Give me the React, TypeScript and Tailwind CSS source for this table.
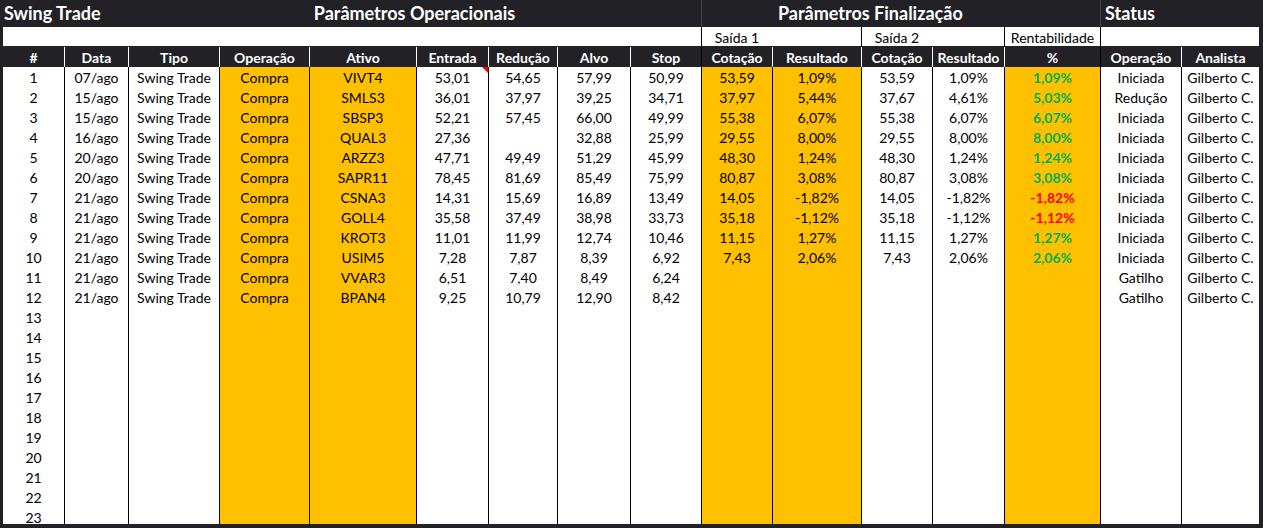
const grid =
  "grid grid-cols-[61px_64px_91px_90px_107px_72px_69px_73px_71px_71px_89px_71px_72px_96px_81px_78px]";

const orange = [3, 4, 9, 10, 13];

const headers = [
  "#",
  "Data",
  "Tipo",
  "Operação",
  "Ativo",
  "Entrada",
  "Redução",
  "Alvo",
  "Stop",
  "Cotação",
  "Resultado",
  "Cotação",
  "Resultado",
  "%",
  "Operação",
  "Analista",
];

// data, ativo, entrada, redução, alvo, stop, cot1, res1, cot2, res2, rent, status
const trades: string[][] = [
  ["07/ago", "VIVT4", "53,01", "54,65", "57,99", "50,99", "53,59", "1,09%", "53,59", "1,09%", "1,09%", "Iniciada"],
  ["15/ago", "SMLS3", "36,01", "37,97", "39,25", "34,71", "37,97", "5,44%", "37,67", "4,61%", "5,03%", "Redução"],
  ["15/ago", "SBSP3", "52,21", "57,45", "66,00", "49,99", "55,38", "6,07%", "55,38", "6,07%", "6,07%", "Iniciada"],
  ["16/ago", "QUAL3", "27,36", "", "32,88", "25,99", "29,55", "8,00%", "29,55", "8,00%", "8,00%", "Iniciada"],
  ["20/ago", "ARZZ3", "47,71", "49,49", "51,29", "45,99", "48,30", "1,24%", "48,30", "1,24%", "1,24%", "Iniciada"],
  ["20/ago", "SAPR11", "78,45", "81,69", "85,49", "75,99", "80,87", "3,08%", "80,87", "3,08%", "3,08%", "Iniciada"],
  ["21/ago", "CSNA3", "14,31", "15,69", "16,89", "13,49", "14,05", "-1,82%", "14,05", "-1,82%", "-1,82%", "Iniciada"],
  ["21/ago", "GOLL4", "35,58", "37,49", "38,98", "33,73", "35,18", "-1,12%", "35,18", "-1,12%", "-1,12%", "Iniciada"],
  ["21/ago", "KROT3", "11,01", "11,99", "12,74", "10,46", "11,15", "1,27%", "11,15", "1,27%", "1,27%", "Iniciada"],
  ["21/ago", "USIM5", "7,28", "7,87", "8,39", "6,92", "7,43", "2,06%", "7,43", "2,06%", "2,06%", "Iniciada"],
  ["21/ago", "VVAR3", "6,51", "7,40", "8,49", "6,24", "", "", "", "", "", "Gatilho"],
  ["21/ago", "BPAN4", "9,25", "10,79", "12,90", "8,42", "", "", "", "", "", "Gatilho"],
];

function buildRow(i: number): string[] {
  const t = trades[i];
  if (!t) return [String(i + 1), ...Array(15).fill("")];
  return [
    String(i + 1),
    t[0],
    "Swing Trade",
    "Compra",
    t[1],
    t[2],
    t[3],
    t[4],
    t[5],
    t[6],
    t[7],
    t[8],
    t[9],
    t[10],
    t[11],
    "Gilberto C.",
  ];
}

export default function App() {
  return (
    <div className="w-[1263px] h-[528px] overflow-hidden bg-[#222226] pl-[3px] pr-[4px] pb-[4px] flex flex-col font-['Lato',sans-serif]">
      {/* Title row */}
      <div className={`${grid} h-[26px] text-white font-bold text-[18px] shrink-0`}>
        <div className="col-span-2 flex items-center pl-[2px] -ml-[1px] pb-[1px] whitespace-nowrap">Swing Trade</div>
        <div className="col-span-7 flex items-center justify-center pb-[1px]">Parâmetros Operacionais</div>
        <div className="col-span-5 flex items-center pl-[76px] pb-[1px] border-l border-[#46464a] whitespace-nowrap">
          Parâmetros Finalização
        </div>
        <div className="col-span-2 flex items-center pl-[4px] pb-[1px] border-l border-[#46464a]">Status</div>
      </div>

      {/* Sub header */}
      <div className={`${grid} h-[19px] mt-[1px] bg-white text-[14px] text-black shrink-0`}>
        <div className="col-span-9" />
        <div className="border-l border-black flex items-center justify-center">Saída 1</div>
        <div />
        <div className="border-l border-black flex items-center justify-center">Saída 2</div>
        <div />
        <div className="border-l border-black flex items-center justify-center">Rentabilidade</div>
        <div className="col-span-2 border-l border-black" />
      </div>

      {/* Column headers */}
      <div className={`${grid} h-[20px] mt-[1px] text-white font-bold text-[14px] shrink-0`}>
        {headers.map((h, i) => (
          <div
            key={i}
            className={`flex items-center justify-center ${
              i === 0 ? "" : i === 9 || i === 14 ? "border-l border-black" : "border-l border-white"
            }`}
          >
            {h}
          </div>
        ))}
      </div>

      {/* Data rows */}
      <div className="flex-1 overflow-hidden bg-white">
        {Array.from({ length: 23 }).map((_, r) => {
          const cells = buildRow(r);
          return (
            <div key={r} className={`${grid} h-[20px] text-[14px] text-black`}>
              {cells.map((c, i) => {
                const isRent = i === 13 && c !== "";
                const neg = c.startsWith("-");
                return (
                  <div
                    key={i}
                    className={`relative flex items-center justify-center whitespace-nowrap ${
                      i === 0 ? "" : "border-l border-black"
                    } ${orange.includes(i) ? "bg-[#ffc000]" : "bg-white"} ${
                      isRent ? (neg ? "font-bold text-[#ff0000]" : "font-bold text-[#00b050]") : ""
                    }`}
                  >
                    {c}
                    {r === 0 && i === 5 && (
                      <svg className="absolute top-0 right-0" width="6" height="6" viewBox="0 0 6 6">
                        <polygon points="0,0 6,0 6,6" fill="#ff0000" />
                      </svg>
                    )}
                  </div>
                );
              })}
            </div>
          );
        })}
      </div>
    </div>
  );
}
